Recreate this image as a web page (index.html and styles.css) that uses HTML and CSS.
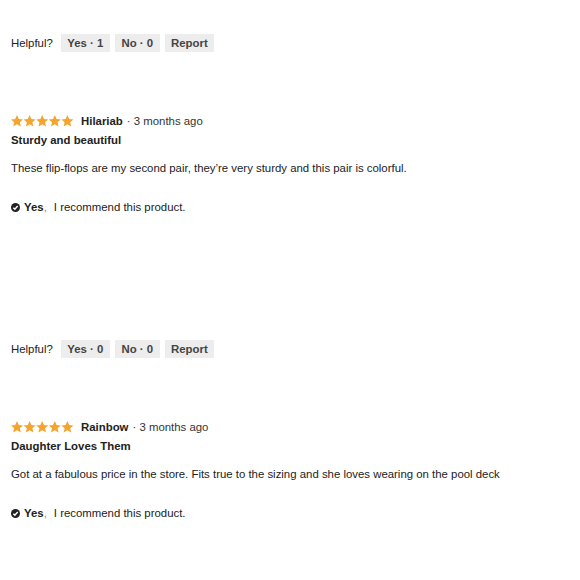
FILE: index.html
```html
<!DOCTYPE html>
<html>
<head>
<meta charset="utf-8">
<link rel="stylesheet" href="styles.css">
</head>
<body>
<div class="page">
  <div class="helpful helpful-first">
    <span class="helpful-label">Helpful?</span>
    <span class="btn">Yes · 1</span>
    <span class="btn">No · 0</span>
    <span class="btn">Report</span>
  </div>

  <div class="review">
    <div class="meta">
      <svg class="stars" width="63" height="12" viewBox="0 0 63 12">
        <g fill="#f3a530">
          <path id="s" d="M6 0 L7.8 4 L12 4.4 L8.8 7.2 L9.8 11.6 L6 9.3 L2.2 11.6 L3.2 7.2 L0 4.4 L4.2 4 Z"/>
          <use href="#s" x="12.6"/>
          <use href="#s" x="25.2"/>
          <use href="#s" x="37.8"/>
          <use href="#s" x="50.4"/>
        </g>
      </svg>
      <span class="author">Hilariab</span>
      <span class="date">· 3 months ago</span>
    </div>
    <div class="title">Sturdy and beautiful</div>
    <p class="body">These flip-flops are my second pair, they’re very sturdy and this pair is colorful.</p>
    <div class="recommend">
      <svg class="check" width="9" height="9" viewBox="0 0 10 10"><circle cx="5" cy="5" r="5" fill="#222"/><path d="M2.6 5.2 L4.3 6.8 L7.4 3.4" fill="none" stroke="#fff" stroke-width="1.6"/></svg>
      <span class="rec-yes">Yes</span><span class="comma">,</span>
      <span class="rec-text">I recommend this product.</span>
    </div>
  </div>

  <div class="helpful">
    <span class="helpful-label">Helpful?</span>
    <span class="btn">Yes · 0</span>
    <span class="btn">No · 0</span>
    <span class="btn">Report</span>
  </div>

  <div class="review">
    <div class="meta">
      <svg class="stars" width="63" height="12" viewBox="0 0 63 12">
        <g fill="#f3a530">
          <path id="s2" d="M6 0 L7.8 4 L12 4.4 L8.8 7.2 L9.8 11.6 L6 9.3 L2.2 11.6 L3.2 7.2 L0 4.4 L4.2 4 Z"/>
          <use href="#s2" x="12.6"/>
          <use href="#s2" x="25.2"/>
          <use href="#s2" x="37.8"/>
          <use href="#s2" x="50.4"/>
        </g>
      </svg>
      <span class="author">Rainbow</span>
      <span class="date">· 3 months ago</span>
    </div>
    <div class="title">Daughter Loves Them</div>
    <p class="body">Got at a fabulous price in the store. Fits true to the sizing and she loves wearing on the pool deck</p>
    <div class="recommend">
      <svg class="check" width="9" height="9" viewBox="0 0 10 10"><circle cx="5" cy="5" r="5" fill="#222"/><path d="M2.6 5.2 L4.3 6.8 L7.4 3.4" fill="none" stroke="#fff" stroke-width="1.6"/></svg>
      <span class="rec-yes">Yes</span><span class="comma">,</span>
      <span class="rec-text">I recommend this product.</span>
    </div>
  </div>
</div>
</body>
</html>
```

FILE: styles.css
```css
html, body {
  margin: 0;
  padding: 0;
  background: #fff;
}
body {
  font-family: "Liberation Sans", Arial, sans-serif;
  font-size: 11.4px;
  line-height: 14px;
  color: #222;
}
.page {
  padding: 0 11px;
}
.helpful {
  display: flex;
  align-items: center;
  height: 18px;
  margin-top: 126px;
}
.helpful-first {
  margin-top: 34px;
}
.helpful-label {
  color: #222;
  margin-right: 8px;
}
.btn {
  display: flex;
  align-items: center;
  height: 18px;
  padding: 0 6.5px;
  margin-right: 5px;
  background: #ededed;
  color: #444;
  font-weight: bold;
}
.review {
  margin-top: 62px;
}
.meta {
  display: flex;
  align-items: center;
  height: 14px;
}
.stars {
  display: block;
  margin-right: 7px;
}
.author {
  font-weight: bold;
  color: #222;
  margin-right: 4px;
}
.date {
  color: #333;
}
.title {
  margin-top: 5px;
  font-weight: bold;
  color: #222;
}
.body {
  margin: 14px 0 0;
  color: #222;
}
.recommend {
  margin-top: 25px;
  display: flex;
  align-items: center;
  height: 14px;
}
.check {
  display: block;
  margin-right: 4px;
}
.rec-yes {
  font-weight: bold;
  color: #222;
}
.comma {
  color: #888;
  margin-right: 7px;
}
.rec-text {
  color: #222;
}
```
